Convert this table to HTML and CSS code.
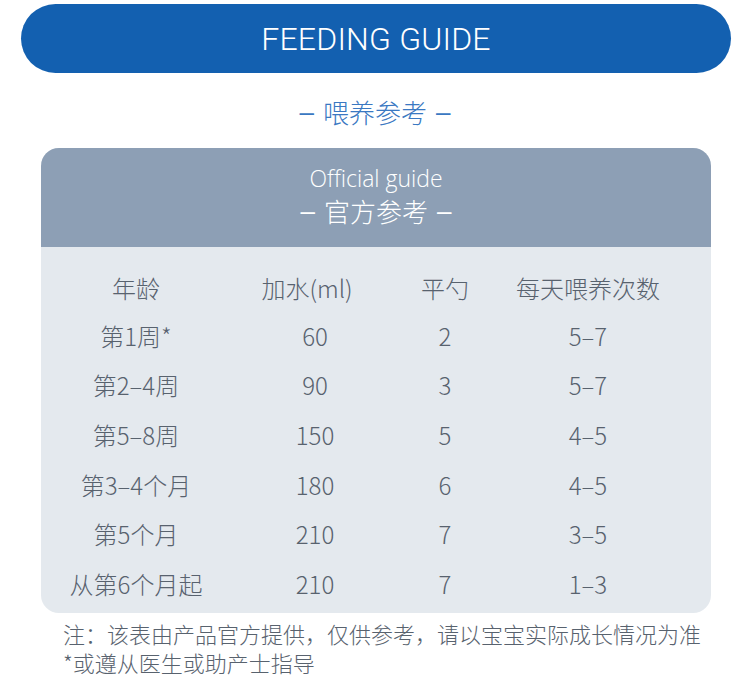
FILE: index.html
```html
<!DOCTYPE html>
<html lang="zh">
<head>
<meta charset="utf-8">
<link rel="stylesheet" href="styles.css">
</head>
<body>
<div class="page">
  <div class="banner">FEEDING GUIDE</div>
  <div class="subtitle"><span class="dash">–</span>喂养参考<span class="dash">–</span></div>
  <div class="card">
    <div class="card-head">
      <div class="en">Official guide</div>
      <div class="cn"><span class="dash">–</span>官方参考<span class="dash">–</span></div>
    </div>
    <div class="card-body">
      <div class="row head">
        <div>年龄</div><div class="c2h">加水(ml)</div><div>平勺</div><div>每天喂养次数</div>
      </div>
      <div class="row"><div>第1周*</div><div>60</div><div>2</div><div>5–7</div></div>
      <div class="row"><div>第2–4周</div><div>90</div><div>3</div><div>5–7</div></div>
      <div class="row"><div>第5–8周</div><div>150</div><div>5</div><div>4–5</div></div>
      <div class="row"><div>第3–4个月</div><div>180</div><div>6</div><div>4–5</div></div>
      <div class="row"><div>第5个月</div><div>210</div><div>7</div><div>3–5</div></div>
      <div class="row"><div>从第6个月起</div><div>210</div><div>7</div><div>1–3</div></div>
    </div>
  </div>
  <div class="note">
    <div>注：该表由产品官方提供，仅供参考，请以宝宝实际成长情况为准</div>
    <div>*或遵从医生或助产士指导</div>
  </div>
</div>
</body>
</html>
```

FILE: styles.css
```css
html, body {
  margin: 0;
  padding: 0;
  background: #ffffff;
}
body {
  font-family: "Noto Sans CJK SC", "Noto Sans", sans-serif;
  font-weight: 300;
  width: 750px;
  height: 690px;
  overflow: hidden;
}
.page {
  display: flex;
  flex-direction: column;
  align-items: center;
  padding-top: 4px;
}
.banner {
  width: 710px;
  height: 69px;
  margin-left: 2px;
  border-radius: 35px;
  background: #1360b0;
  color: #ffffff;
  font-family: "Roboto", "Liberation Sans", sans-serif;
  font-weight: 300;
  font-size: 32px;
  display: flex;
  align-items: center;
  justify-content: center;
  letter-spacing: 0.2px;
}
.subtitle {
  margin-top: 22px;
  height: 34px;
  line-height: 34px;
  color: #3a78c2;
  font-size: 26px;
  display: flex;
  align-items: center;
}
.dash {
  font-family: "Liberation Sans", sans-serif;
  margin: 0 9px;
}
.card {
  margin-top: 19px;
  width: 670px;
  margin-left: 2px;
  border-radius: 18px;
  overflow: hidden;
  background: #e4e9ee;
}
.card-head {
  background: #8d9fb5;
  height: 99px;
  color: #ffffff;
  display: flex;
  flex-direction: column;
  align-items: center;
  padding-top: 17px;
  box-sizing: border-box;
}
.card-head .en {
  font-family: "Open Sans", "Liberation Sans", sans-serif;
  font-weight: 300;
  font-size: 23px;
  line-height: 26px;
}
.card-head .cn {
  font-size: 26px;
  line-height: 34px;
  margin-top: 3px;
  display: flex;
  align-items: center;
}
.card-body {
  padding: 20px 0 4px 0;
}
.row {
  display: grid;
  grid-template-columns: 190px 168px 92px 194px;
  height: 49.6px;
  align-items: center;
  color: #58626e;
  font-size: 24px;
}
.row > div {
  text-align: center;
  line-height: 34px;
  white-space: nowrap;
}
.row.head {
  height: 42px;
  margin-bottom: 2px;
}
.row .c2h {
  padding-right: 16px;
}
.note {
  align-self: flex-start;
  margin-left: 63px;
  margin-top: 6px;
  color: #58626e;
  font-size: 22px;
  line-height: 29px;
}
```
